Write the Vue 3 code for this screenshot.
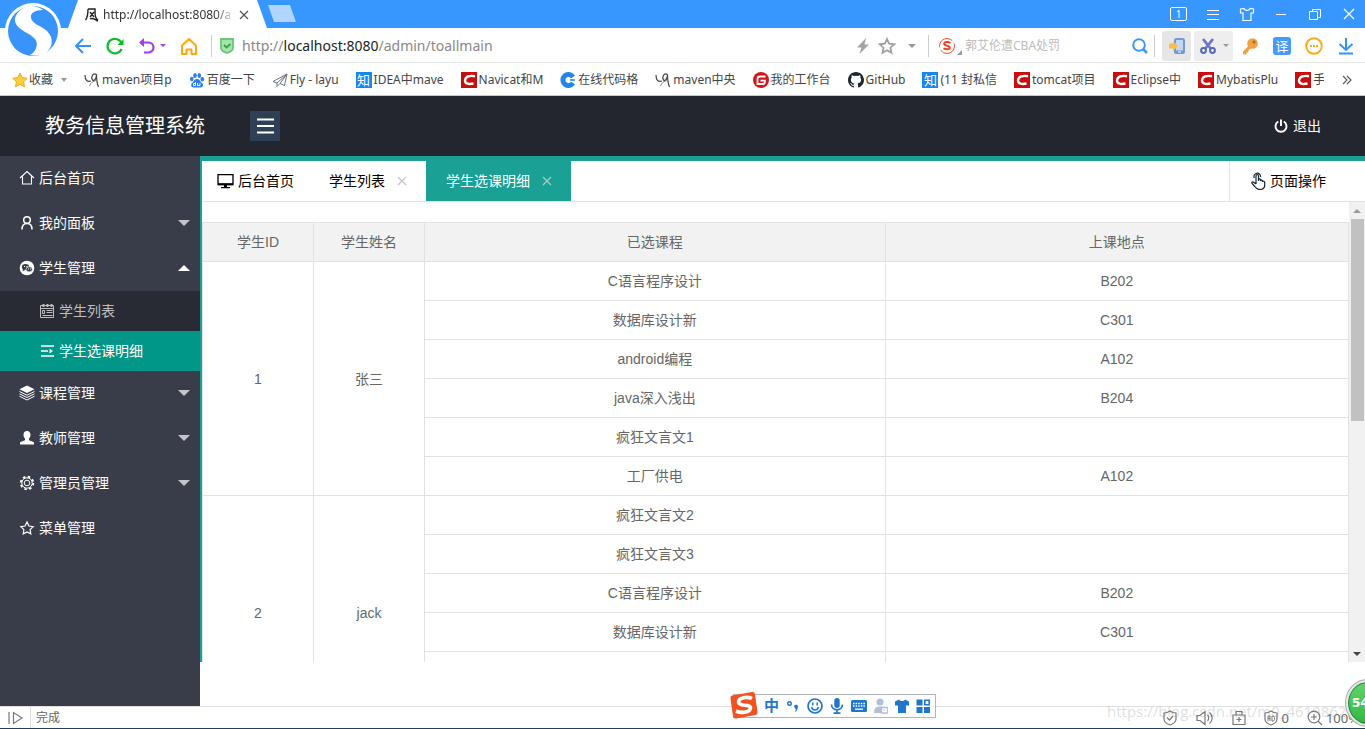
<script setup>
import { ref } from 'vue'

const icons = {
  back: '<path d="M17 9H2M9 2L2 9l7 7" fill="none" stroke="#3393fb" stroke-width="2"/>',
  reload: '<path d="M15.5 6A7.3 7.3 0 1 0 15.600 12" fill="none" stroke="#0cbd28" stroke-width="2.200"/><path d="M17.500 2v6h-6z" fill="#0cbd28"/>',
  undo: '<path d="M4 5.500h6.500a5 5 0 0 1 0 10H6" fill="none" stroke="#a03cf2" stroke-width="2.200"/><path d="M1 5.500L6 1v9z" fill="#a03cf2"/>',
  home: '<path d="M2 8.500L9 2l7 6.500V17h-4.500v-4.500h-5V17H2z" fill="none" stroke="#ffa511" stroke-width="2" stroke-linejoin="round"/>',
  bolt: '<path d="M12 1L3 10.500h4.500L5.500 17 15 7.500h-4.500z" fill="#a3a3a3"/>',
  star: '<path d="M9 2l2.100 4.700 5.100.6-3.800 3.400 1.100 5.100L9 13.200l-4.500 2.600 1.100-5.100L1.800 7.300l5.100-.6z" fill="none" stroke="#a0a0a0" stroke-width="1.800"/>',
  sogou: '<circle cx="9" cy="9" r="7.500" fill="none" stroke="#f0533a" stroke-width="1" stroke-dasharray="19 3"/><path d="M12.500 5.800C10 4.500 6.300 4.500 6.200 6.700c0 2.700 5.600 1.500 5.600 4 0 2-3.600 2-6.300.7" fill="none" stroke="#ee4327" stroke-width="2"/>',
  search: '<circle cx="8" cy="8" r="5.800" fill="none" stroke="#3e97f6" stroke-width="2"/><path d="M12 12l4 4" stroke="#3e97f6" stroke-width="2.500"/>',
  phone: '<rect x="7" y="2" width="9" height="14" rx="1.500" fill="#c3d7f5" stroke="#7399cf" stroke-width="2"/><path d="M7 15h9" stroke="#7399cf" stroke-width="3"/><path d="M10 15h3" stroke="#fff"/><path d="M1 6.500h4V4l5 5-5 5v-2.500H1z" fill="#fabd48"/>',
  cut: '<path d="M4 2l8 10M14 2L6 12" stroke="#6a78c4" stroke-width="2.800"/><circle cx="4.500" cy="13.500" r="2.400" fill="none" stroke="#5968b9" stroke-width="2"/><circle cx="13.500" cy="13.500" r="2.400" fill="none" stroke="#5968b9" stroke-width="2"/>',
  key: '<path d="M9 8L2.500 14.500V17H5v-2h2v-2l4-3" fill="#f0a045" stroke="#f0a045"/><circle cx="11.500" cy="6.500" r="5.300" fill="#f0a045"/><circle cx="13" cy="5" r="1.500" fill="#a86a20"/>',
  more: '<circle cx="9" cy="9" r="7.800" fill="none" stroke="#fba919" stroke-width="1.900"/><path d="M5 9h2M8 9h2M11 9h2" stroke="#fba919" stroke-width="2"/>',
  download: '<path d="M9 1v12M2.500 7L9 13l6.500-6M2 16.500h14" fill="none" stroke="#3393fb" stroke-width="2"/>',
  house: '<path d="M1 8L8 1.500 15 8M3.500 6.500V14h9V6.500" fill="none" stroke="currentColor" stroke-width="1.100"/>',
  user: '<circle cx="8" cy="5" r="3.300" fill="none" stroke="currentColor" stroke-width="1.500"/><path d="M3 14.500c0-4 2-6 5-6s5 2 5 6" fill="none" stroke="currentColor" stroke-width="1.500"/>',
  chat: '<circle cx="8" cy="8" r="7.300" fill="currentColor"/><ellipse cx="6.500" cy="7" rx="3.700" ry="3" fill="#393d49"/><path d="M4 9l-.5 2.500L7 9.500z" fill="#393d49"/><ellipse cx="10.200" cy="9.300" rx="3.200" ry="2.600" fill="#393d49" stroke="#fff" stroke-width=".7"/><path d="M5 6.500h1M7.500 6.500h1M9 9h1M11 9h1" stroke="#fff"/>',
  list: '<path d="M1.500 2.500h13v12h-13z" fill="none" stroke="currentColor"/><path d="M4.500 1v3M8.500 1v3M12.500 1v3" stroke="currentColor" stroke-width="2"/><path d="M1.500 5.500h13M3.500 7.500h2v3h-2zM7.500 7.500h6M7.500 9.500h6M3.500 12.500h10" fill="none" stroke="currentColor"/>',
  indent: '<path d="M2 3h13M2 8h7M2 13h13" stroke="currentColor" stroke-width="1.700"/><path d="M10.500 5.500L14 8l-3.500 2.500z" fill="currentColor"/>',
  layers: '<path d="M8 .5l7.500 3.700L8 8 .5 4.200z" fill="currentColor"/><path d="M.5 6.500L8 10.200l7.500-3.700M.5 8.800L8 12.500l7.500-3.700M.5 11.200L8 15l7.500-3.800" fill="none" stroke="currentColor"/>',
  teacher: '<path d="M8 1c2.500 0 3.600 1.700 3.500 4-.1 1.800-.8 2.800-1.500 3.800v1.400l4.500 1.800c.5.300.5 1 .5 2.500H1c0-1.500 0-2.200.5-2.500L6 10.200V8.800C5.300 7.800 4.600 6.800 4.500 5 4.400 2.700 5.500 1 8 1z" fill="currentColor"/>',
  gear: '<circle cx="8" cy="8" r="6.300" fill="none" stroke="currentColor" stroke-width="1.800" stroke-dasharray="2.500 2.450"/><circle cx="8" cy="8" r="5.200" fill="#393d49" stroke="currentColor"/><circle cx="8" cy="8" r="2.800" fill="none" stroke="currentColor"/>',
  fav: '<path d="M8 2l1.900 4 4.300.6-3.100 3 .7 4.300L8 11.900l-3.800 2 .7-4.300-3.100-3L6.100 6z" fill="none" stroke="currentColor" stroke-width="1.200"/>'
}

const leftTools = [['back', '后退'], ['reload', '刷新'], ['undo', '恢复']]

const bookmarks = [
  { kind: 'maven', text: 'maven项目p' },
  { kind: 'baidu', text: '百度一下' },
  { kind: 'fly', text: 'Fly - layu' },
  { kind: 'zhi', text: 'IDEA中mave' },
  { kind: 'csdn', text: 'Navicat和M' },
  { kind: 'code', text: '在线代码格' },
  { kind: 'maven', text: 'maven中央' },
  { kind: 'gitee', text: '我的工作台' },
  { kind: 'github', text: 'GitHub' },
  { kind: 'zhi', text: '(11 封私信' },
  { kind: 'csdn', text: 'tomcat项目' },
  { kind: 'csdn', text: 'Eclipse中' },
  { kind: 'csdn', text: 'MybatisPlu' },
  { kind: 'csdn', text: '手扌' }
]

const menu = ref([
  { icon: 'house', text: '后台首页' },
  { icon: 'user', text: '我的面板', more: true },
  {
    icon: 'chat', text: '学生管理', more: true, open: true,
    children: [
      { icon: 'list', text: '学生列表' },
      { icon: 'indent', text: '学生选课明细', active: true }
    ]
  },
  { icon: 'layers', text: '课程管理', more: true },
  { icon: 'teacher', text: '教师管理', more: true },
  { icon: 'gear', text: '管理员管理', more: true },
  { icon: 'fav', text: '菜单管理' }
])

const students = [
  {
    id: 1, name: '张三',
    courses: [['C语言程序设计', 'B202'], ['数据库设计新', 'C301'], ['android编程', 'A102'], ['java深入浅出', 'B204'], ['疯狂文言文1', ''], ['工厂供电', 'A102']]
  },
  {
    id: 2, name: 'jack',
    courses: [['疯狂文言文2', ''], ['疯狂文言文3', ''], ['C语言程序设计', 'B202'], ['数据库设计新', 'C301'], ['', ''], ['', '']]
  }
]
</script>

<template>
  <div class="window">
    <header class="chrome">
      <div class="titlebar">
        <div class="tab">
          <svg width="14" height="14" viewBox="0 0 14 14"><path d="M3 1h7v3c0 4 1 7 3 8M3 1c0 5 0 8-2.500 11M5 4l4 5M9 4l-4 5M5 11c3-2 5 1 8 2" fill="none" stroke="#222" stroke-width="1.400" /></svg>
          <span class="tab-title">http://localhost:8080/a</span>
          <button class="plain" aria-label="关闭标签"><svg width="10" height="10" viewBox="0 0 10 10"><path d="M1 1l8 8M9 1L1 9" stroke="#555" stroke-width="1.200" /></svg></button>
        </div>
        <button class="new-tab" aria-label="新建标签"></button>
        <div class="win-controls">
          <button class="count">1</button>
          <button class="plain" aria-label="菜单"><svg width="16" height="16" viewBox="0 0 16 16"><path d="M2 4.500h12M2 8.500h12M2 13.500h12" stroke="#fff" /></svg></button>
          <button class="plain" aria-label="皮肤"><svg width="16" height="16" viewBox="0 0 16 16"><path d="M5 2.500L1.500 3v4h2.500v7.500h8V7h2.500V3L11 2.500C10 5 6 5 5 2.500z" fill="none" stroke="#fff" stroke-width="1.200" /></svg></button>
          <button class="plain" aria-label="最小化"><svg width="16" height="16" viewBox="0 0 16 16"><path d="M3 8.500h10" stroke="#fff" /></svg></button>
          <button class="plain" aria-label="还原"><svg width="16" height="16" viewBox="0 0 16 16"><path d="M2.500 5.500h8v8h-8zM5.500 5V3.500h8v8H11" fill="none" stroke="#fff" /></svg></button>
          <button class="plain" aria-label="关闭"><svg width="16" height="16" viewBox="0 0 16 16"><path d="M3 3l10 10M13 3L3 13" stroke="#fff" stroke-width="1.200" /></svg></button>
        </div>
      </div>

      <div class="toolbar">
        <div class="nav">
          <button v-for="t in leftTools" :key="t[0]" class="plain" :aria-label="t[1]"><svg width="18" height="18" viewBox="0 0 18 18" v-html="icons[t[0]]"></svg></button>
        </div>
        <i class="caret purple"></i>
        <button class="plain home" aria-label="主页"><svg width="18" height="18" viewBox="0 0 18 18" v-html="icons.home"></svg></button>
        <i class="sep"></i>
        <svg class="shield" width="14" height="16" viewBox="0 0 14 16"><path d="M1 1h12v9c0 3-3 4-6 5-3-1-6-2-6-5z" fill="#a8e2ac" stroke="#67c777" stroke-width="1.800" /><path d="M4 7l2.500 2.500L10.500 6" fill="none" stroke="#35a24c" stroke-width="1.800" /></svg>
        <div class="url" role="textbox" aria-label="地址">http://<b>localhost:8080</b>/admin/toallmain</div>
        <div class="side">
          <button class="plain" aria-label="加速"><svg width="18" height="18" viewBox="0 0 18 18" v-html="icons.bolt"></svg></button>
          <button class="plain" aria-label="收藏本页"><svg width="18" height="18" viewBox="0 0 18 18" v-html="icons.star"></svg></button>
          <i class="caret"></i>
        </div>
        <i class="sep"></i>
        <form class="search" @submit.prevent>
          <svg width="18" height="18" viewBox="0 0 18 18" v-html="icons.sogou"></svg>
          <svg width="5" height="5" viewBox="0 0 5 5"><path d="M5 0v5H0z" fill="#999" /></svg>
          <input type="text" aria-label="搜索" placeholder="郭艾伦遭CBA处罚">
          <button class="plain" aria-label="搜索"><svg width="18" height="18" viewBox="0 0 18 18" v-html="icons.search"></svg></button>
        </form>
        <i class="sep"></i>
        <button class="plain boxed" aria-label="手机"><svg width="18" height="18" viewBox="0 0 18 18" v-html="icons.phone"></svg></button>
        <button class="plain boxed wide" aria-label="截图"><svg width="18" height="18" viewBox="0 0 18 18" v-html="icons.cut"></svg><i class="caret"></i></button>
        <div class="extras">
          <button class="plain" aria-label="密码"><svg width="18" height="18" viewBox="0 0 18 18" v-html="icons.key"></svg></button>
          <button class="plain translate">译</button>
          <button class="plain" aria-label="更多"><svg width="18" height="18" viewBox="0 0 18 18" v-html="icons.more"></svg></button>
          <button class="plain" aria-label="下载"><svg width="18" height="18" viewBox="0 0 18 18" v-html="icons.download"></svg></button>
        </div>
      </div>

      <nav class="bookmarks">
        <button class="plain fav">
          <svg width="16" height="16" viewBox="0 0 16 16"><path d="M8 1l2.200 4.600 5 .7-3.600 3.500.9 5L8 12.400l-4.500 2.400.9-5L.8 6.300l5-.7z" fill="#fbce3c" stroke="#e5a82c" /></svg>
          收藏<i class="caret"></i>
        </button>
        <div class="links">
          <a v-for="(b, i) in bookmarks" :key="i" href="#">
            <svg v-if="b.kind === 'maven'" width="16" height="16" viewBox="0 0 16 16"><path d="M1 3c0 5 2 7.500 6 6M12.500 2.500C9 .5 6.500 5 8.500 8c1.500 1.500 4-1 4-5.500 0 5 .5 9 2 12.500" fill="none" stroke="#444" stroke-width="1.200" /><path d="M12.500 8.500C9 9 6.500 11 5.500 14" fill="none" stroke="#888" /></svg>
            <svg v-else-if="b.kind === 'baidu'" width="16" height="16" viewBox="0 0 16 16"><g fill="#2b7df0"><ellipse cx="2.800" cy="7" rx="1.800" ry="2.300" /><ellipse cx="6" cy="3.500" rx="1.800" ry="2.500" /><ellipse cx="10.300" cy="3.500" rx="1.800" ry="2.500" /><ellipse cx="13.300" cy="7.200" rx="1.800" ry="2.300" /><path d="M8 7c3 0 3 2.500 5 4s1 4.500-1.500 4.500h-7C2 15.500 1.500 12.500 3.200 11S5 7 8 7z" /></g><path d="M6.500 10v3.500h-2v-2h2M8.500 11v2.500h2.500V11" fill="none" stroke="#fff" /></svg>
            <svg v-else-if="b.kind === 'fly'" width="16" height="16" viewBox="0 0 16 16"><path d="M15 2L1 9.500l4 1.500L15 2l-2.500 11.500-4.500-2L15 2M5 11v3.500l3-3" fill="none" stroke="#6b737d" /></svg>
            <span v-else-if="b.kind === 'zhi'" class="zhi" aria-hidden="true">知</span>
            <svg v-else-if="b.kind === 'csdn'" width="16" height="16" viewBox="0 0 16 16"><path d="M0 0h16v16H0z" fill="#c90d0d" /><path d="M14 4.200C9 3.200 4.300 4.500 4 8.500c0 3.500 4 4 8.500 3" fill="none" stroke="#fff" stroke-width="2.400" /></svg>
            <svg v-else-if="b.kind === 'code'" width="16" height="16" viewBox="0 0 16 16"><path d="M13 5A5.500 5.500 0 1 0 13 11" fill="none" stroke="#2386e8" stroke-width="5" /><path d="M10 8h5" stroke="#2386e8" stroke-width="1.500" /></svg>
            <svg v-else-if="b.kind === 'gitee'" width="16" height="16" viewBox="0 0 16 16"><circle cx="8" cy="8" r="8" fill="#d8141c" /><path d="M12.500 4.500H7C5 4.500 4.500 5.500 4.500 7v5H10c1.500 0 2-1 2-3.300H7.500" fill="none" stroke="#fff" stroke-width="1.800" /></svg>
            <svg v-else width="16" height="16" viewBox="0 0 16 16"><path d="M8 0C3.600 0 0 3.600 0 8c0 3.500 2.300 6.500 5.500 7.600.4.100.5-.2.500-.4v-1.400c-2.200.5-2.700-1-2.700-1-.4-.9-.9-1.200-.9-1.200-.7-.5.100-.5.100-.5.800.1 1.200.8 1.200.8.700 1.200 1.900.9 2.300.7.100-.5.300-.9.500-1.100-1.800-.2-3.600-.9-3.600-4 0-.9.300-1.600.8-2.100-.1-.2-.4-1 .1-2.100 0 0 .7-.2 2.200.8a7.600 7.600 0 0 1 4 0c1.500-1 2.200-.8 2.200-.8.400 1.100.2 1.900.1 2.100.5.600.8 1.300.8 2.100 0 3.100-1.900 3.700-3.700 3.900.3.300.6.700.6 1.500v2.200c0 .2.100.5.600.4C13.700 14.500 16 11.500 16 8c0-4.400-3.600-8-8-8z" fill="#20262c" /></svg>
            <span>{{ b.text }}</span>
          </a>
        </div>
        <button class="plain chev" aria-label="更多书签"><svg width="10" height="10" viewBox="0 0 10 10"><path d="M1 1l4 4-4 4M5 1l4 4-4 4" fill="none" stroke="#555" stroke-width="1.100" /></svg></button>
      </nav>

      <svg class="logo" width="60" height="60" viewBox="0 0 60 60"><circle cx="30" cy="30" r="28" fill="#fff" /><circle cx="30" cy="30" r="25" fill="#3894f8" /><path d="M22 6C13 11 10 18 13 23c4 7 14 9 19 15 4 5 1 13-5 16 5 1 11 1 16-2 7-6 8-15 1-22-5-5-15-7-16-13-1-5 4-8 12-8-5-4-12-5-18-3z" fill="#fff" /></svg>
    </header>

    <header class="app-header">
      <h1>教务信息管理系统</h1>
      <button class="burger" aria-label="折叠菜单"><svg width="18" height="16" viewBox="0 0 18 16"><path d="M1 1.500h17M1 8h17M1 14.500h17" stroke="#fff" stroke-width="2" /></svg></button>
      <a class="logout" href="#"><svg width="14" height="14" viewBox="0 0 14 14"><path d="M4.300 2.500a5.500 5.500 0 1 0 5.400 0M7 .5v6.500" fill="none" stroke="currentColor" stroke-width="1.900" /></svg>退出</a>
    </header>

    <div class="body">
      <nav class="sidebar">
        <div v-for="m in menu" :key="m.text">
          <a class="item" href="#" @click.prevent="m.open = !m.open">
            <svg width="16" height="16" viewBox="0 0 16 16" v-html="icons[m.icon]"></svg>
            <span>{{ m.text }}</span>
            <i v-if="m.more" class="arrow" :class="{ up: m.open }"></i>
          </a>
          <div v-if="m.children && m.open" class="sub">
            <a v-for="c in m.children" :key="c.text" href="#" :class="{ active: c.active }">
              <svg width="16" height="16" viewBox="0 0 16 16" v-html="icons[c.icon]"></svg>
              <span>{{ c.text }}</span>
            </a>
          </div>
        </div>
      </nav>

      <main>
        <div class="tabs">
          <a class="home-tab" href="#"><svg width="17" height="16" viewBox="0 0 17 16"><path d="M1 1.700h15v9.800H1z" fill="none" stroke="#000" stroke-width="1.300" /><path d="M1 11.200h15" stroke="#000" stroke-width="2" /><path d="M7 12h3v2h3v1.200H4V14h3z" fill="#000" /></svg>后台首页</a>
          <a href="#">学生列表<svg width="10" height="10" viewBox="0 0 10 10"><path d="M1 1l8 8M9 1L1 9" stroke="#c5c5c5" stroke-width="1.200" /></svg></a>
          <a class="current" href="#">学生选课明细<svg width="10" height="10" viewBox="0 0 10 10"><path d="M1 1l8 8M9 1L1 9" stroke="#a4cfc9" stroke-width="1.200" /></svg></a>
          <a class="ops" href="#"><svg width="15" height="18" viewBox="0 0 15 18"><path d="M5 12V4c0-2 2.500-2 2.500 0v5V7.500c0-1 2-1 2 .5v1c0-1.300 2-1 2 .3v.7c0-1.200 2.200-1 2.200.5v2.500c0 3-2 4.500-5 4.500-2.500 0-3.500-1-5-3L1 11.500c-.8-1.300.8-2.200 2-1L5 12M3.300 6A3.300 3.300 0 1 1 9.500 5" fill="none" stroke="#102030" stroke-width="1.200" /></svg>页面操作</a>
        </div>
        <div class="frame">
          <div class="content">
            <table>
              <colgroup><col class="narrow"><col class="narrow"><col class="course"><col></colgroup>
              <thead>
                <tr><th>学生ID</th><th>学生姓名</th><th>已选课程</th><th>上课地点</th></tr>
              </thead>
              <tbody>
                <template v-for="s in students" :key="s.id">
                  <tr v-for="(c, i) in s.courses" :key="i">
                    <td v-if="i === 0" :rowspan="s.courses.length">{{ s.id }}</td>
                    <td v-if="i === 0" :rowspan="s.courses.length">{{ s.name }}</td>
                    <td>{{ c[0] }}</td>
                    <td>{{ c[1] }}</td>
                  </tr>
                </template>
              </tbody>
            </table>
          </div>
          <div class="scrollbar"><i class="tri up"></i><span class="thumb"></span><i class="tri down"></i></div>
        </div>
      </main>
    </div>

    <footer class="status">
      <button class="plain play" aria-label="侧栏"><svg width="15" height="14" viewBox="0 0 15 14"><path d="M1 1v12M5.500 1.500v11L14 7z" fill="none" stroke="#777" stroke-width="1.200" /></svg></button>
      <span class="done">完成</span>
      <div class="tools">
        <svg width="16" height="16" viewBox="0 0 16 16"><path d="M2 3c2.500 0 4-.5 6-2 2 1.500 3.500 2 6 2v6c0 3.500-3 5-6 6-3-1-6-2.500-6-6zM5 7.500L7.500 10 11 6" fill="none" stroke="#777" stroke-width="1.200" /></svg>
        <svg width="18" height="16" viewBox="0 0 18 16"><path d="M1 5.500h3l5-4v13l-5-4H1zM11.500 5c1.500 1.500 1.500 4.500 0 6M13.500 2.500c3.500 3 3.500 8 0 11" fill="none" stroke="#777" stroke-width="1.200" /></svg>
        <svg width="14" height="16" viewBox="0 0 14 16"><path d="M1 5h12v9.500H1zM4 5V1.500h6V5M7 7v5M4.500 9.500h5" fill="none" stroke="#777" stroke-width="1.200" /></svg>
        <span class="ad"><svg width="14" height="16" viewBox="0 0 14 16"><path d="M1 3c2.500 0 4-.5 6-2 2 1.500 3.500 2 6 2v6c0 3.500-3 5-6 6-3-1-6-2.500-6-6z" fill="none" stroke="#777" stroke-width="1.200" /><path d="M4 11V6h2v5M4 8.500h2M8 6h1.500l1 1.500v2l-1 1.500H8z" fill="none" stroke="#777" /></svg>0</span>
        <span class="zoom"><svg width="16" height="16" viewBox="0 0 16 16"><path d="M11 11l4 4M7 4v6M4 7h6" stroke="#777" stroke-width="1.200" /><circle cx="7" cy="7" r="5.800" fill="none" stroke="#777" stroke-width="1.200" /></svg>100%</span>
      </div>
    </footer>

    <div class="watermark">https://blog.csdn.net/m0_46198627</div>
    <div class="ball">54</div>

    <div class="ime">
      <svg class="ime-logo" width="28" height="28" viewBox="0 0 28 28"><path d="M2 4.500L22 1q2.500-.3 3 2l2.500 18q.2 2.500-2 3L6 27.500q-2.500.2-3-2L.5 7.500Q0 5 2 4.500z" fill="#f0531f" /><path d="M22 7.500C17 5 8.500 7 8.500 11c0 5 12.500 1.500 12 6-.5 4.500-9 5.500-14.500 3" fill="none" stroke="#fff" stroke-width="3.600" /></svg>
      <span class="zh">中</span>
      <svg width="14" height="16" viewBox="0 0 14 16"><circle cx="3.500" cy="5.500" r="1.800" fill="none" stroke="#1f77cb" stroke-width="1.400" /><path d="M8 8.500a2 2 0 1 1 3.500 1.500c0 2-1 3.500-3 4 1-1 1.300-2 1.200-3" fill="#1f77cb" /></svg>
      <svg width="16" height="16" viewBox="0 0 16 16"><circle cx="8" cy="8" r="7" fill="none" stroke="#1f77cb" stroke-width="1.700" /><path d="M5.800 4.500v3M10.200 4.500v3M4.500 9c1 4 6 4 7 0" fill="none" stroke="#1f77cb" stroke-width="1.500" /></svg>
      <svg width="14" height="16" viewBox="0 0 14 16"><rect x="4.300" y="0" width="5.400" height="10" rx="2.700" fill="#1f77cb" /><path d="M1.500 6.500c0 7 11 7 11 0M7 12v3M3.500 15.200h7" fill="none" stroke="#1f77cb" stroke-width="1.700" /></svg>
      <svg width="16" height="16" viewBox="0 0 16 16"><rect y="2" width="16" height="12" rx="1.500" fill="#1f77cb" /><path d="M2 5.500h12M2 8h12" stroke="#fff" stroke-width="1.500" stroke-dasharray="1.500 1.100" /><path d="M4 11.200h8" stroke="#fff" stroke-width="1.300" /></svg>
      <svg width="14" height="16" viewBox="0 0 14 16"><circle cx="6" cy="4" r="3.500" fill="#b3bfd2" /><path d="M0 15c0-5 2-6.500 6-6.500s5 1 6 2V15z" fill="#b3bfd2" /><path d="M7.500 9.500h6v5.500h-6z" fill="#fff" stroke="#b3bfd2" stroke-width="1.300" /><path d="M10 11.500v1.500" stroke="#b3bfd2" /></svg>
      <svg width="14" height="16" viewBox="0 0 14 16"><path d="M4 1.500c1.500 2 4.500 2 6 0l4 2v4h-3V15H3V7.500H0v-4z" fill="#1f77cb" /></svg>
      <svg width="14" height="16" viewBox="0 0 14 16"><path d="M.5 1.500h6v6h-6zM.5 9h6v6h-6zM8 9h6v6H8z" fill="#1f77cb" /><path d="M8.800 2.300h4.400v4.400H8.800z" fill="none" stroke="#1f77cb" stroke-width="1.600" /></svg>
    </div>
  </div>
</template>

<style>
body {
  background: #fff;
}
</style>

<style scoped>
.window {
  position: relative;
  display: flex;
  flex-direction: column;
  height: 100vh;
  overflow: hidden;
  box-sizing: border-box;
  border-bottom: 1px solid #1f4057;
  font: 14px/20px "Liberation Sans", "Noto Sans CJK SC", sans-serif;
  color: #666;
}
svg {
  display: block;
  flex: none;
}
a {
  color: inherit;
  text-decoration: none;
}
button {
  font: inherit;
  color: inherit;
}
.plain {
  display: flex;
  align-items: center;
  justify-content: center;
  padding: 0;
  border: 0;
  background: none;
}
.chrome {
  position: relative;
  flex: none;
  font: 12px/16px "Noto Sans", "Noto Sans CJK SC", sans-serif;
  color: #444;
}
.titlebar {
  display: flex;
  height: 28px;
  background: #3797ff;
}
.tab {
  display: flex;
  align-items: center;
  gap: 4px;
  box-sizing: border-box;
  width: 199px;
  margin-left: 68px;
  padding: 2px 18px 0 17px;
  background: #fff;
  clip-path: polygon(10px 0, 189px 0, 100% 100%, 0 100%);
}
.tab-title {
  flex: 1;
  overflow: hidden;
  white-space: nowrap;
  color: #333;
  mask-image: linear-gradient(90deg, #000 85%, transparent);
}
.new-tab {
  width: 28px;
  height: 17px;
  margin: 5px 0 0 1px;
  padding: 0;
  border: 0;
  background: #b0d5ff;
  clip-path: polygon(0 0, 22px 0, 28px 100%, 6px 100%);
}
.win-controls {
  display: flex;
  align-items: center;
  gap: 18px;
  margin-left: auto;
  padding-right: 8px;
}
.count {
  width: 17px;
  height: 14px;
  padding: 0;
  border: 1px solid #fff;
  border-radius: 2px;
  background: none;
  color: #fff;
  font-size: 10px;
  line-height: 12px;
}
.toolbar {
  display: flex;
  align-items: center;
  box-sizing: border-box;
  height: 35px;
  padding: 1px 10px 0 74px;
  border-bottom: 1px solid #e3e3e3;
}
.nav {
  display: flex;
  gap: 14px;
}
.caret {
  flex: none;
  border: 4px solid transparent;
  border-top-color: #999;
  border-bottom: 0;
}
.caret.purple {
  margin-left: 4px;
  border-width: 3px 3px 0;
  border-top-color: #a03cf2;
}
.home {
  margin-left: 14px;
}
.sep {
  flex: none;
  width: 1px;
  height: 22px;
  background: #ccc;
}
.home + .sep {
  margin-left: 13px;
}
.shield {
  margin: 0 8px;
}
.url {
  flex: 1;
  color: #888;
  font-size: 14px;
  line-height: 20px;
}
.url b {
  color: #222;
  font-weight: 400;
}
.side {
  display: flex;
  align-items: center;
  gap: 6px;
  margin-right: 12px;
}
.side .caret {
  margin-left: 6px;
}
.search {
  display: flex;
  align-items: center;
  width: 211px;
  margin: 0 5px 0 9px;
}
.search > svg + svg {
  align-self: flex-end;
  margin-left: 1px;
}
.search input {
  flex: 1;
  min-width: 0;
  padding: 0 0 0 3px;
  border: 0;
  outline: 0;
  background: none;
  font: inherit;
}
.search input::placeholder {
  color: #bbb;
}
.boxed {
  width: 29px;
  height: 30px;
  margin-left: 7px;
  border-radius: 3px;
  background: #e6e6e6;
}
.boxed.wide {
  gap: 6px;
  width: 39px;
  margin-left: 3px;
  background: #eee;
}
.boxed .caret {
  border-width: 3px 3px 0;
}
.extras {
  display: flex;
  gap: 14px;
  margin-left: 8px;
}
.translate {
  width: 18px;
  height: 18px;
  border-radius: 3px;
  background: #459bfb;
  color: #fff;
  font-size: 13px;
}
.bookmarks {
  display: flex;
  align-items: center;
  box-sizing: border-box;
  height: 33px;
  padding: 1px 13px 0 12px;
  border-bottom: 1px solid #c8c8c8;
}
.fav {
  gap: 1px;
}
.fav .caret {
  margin-left: 7px;
  border-width: 4px 3px 0;
}
.links {
  display: flex;
  flex: 1;
  gap: 17px;
  min-width: 0;
  margin: 0 18px 0 17px;
  overflow: hidden;
}
.links a {
  display: flex;
  flex: none;
  align-items: center;
  gap: 2px;
  white-space: nowrap;
}
.zhi {
  width: 16px;
  height: 16px;
  background: #1687f0;
  color: #fff;
  font-size: 13px;
  line-height: 16px;
  text-align: center;
}
.logo {
  position: absolute;
  top: 1px;
  left: 3px;
}
.app-header {
  display: flex;
  flex: none;
  align-items: center;
  height: 60px;
  padding: 0 44px 0 45px;
  background: #23262e;
  color: #fff;
}
h1 {
  width: 205px;
  margin: 0;
  font-size: 20px;
  font-weight: 400;
  line-height: 28px;
}
.burger {
  display: flex;
  align-items: center;
  justify-content: center;
  width: 30px;
  height: 30px;
  padding: 0;
  border: 0;
  background: #2f4056;
}
.logout {
  display: flex;
  align-items: center;
  gap: 5px;
  margin-left: auto;
}
.body {
  display: flex;
  flex: 1;
  min-height: 0;
}
.sidebar {
  flex: none;
  width: 200px;
  background: #393d49;
  color: #fff;
}
.item,
.sub a {
  display: flex;
  align-items: center;
  gap: 4px;
  box-sizing: border-box;
  height: 45px;
  padding: 0 10px 1px 19px;
}
.arrow {
  margin-left: auto;
  border: 6px solid transparent;
  border-top-color: #c4c5c8;
  border-bottom: 0;
}
.arrow.up {
  border-top: 0;
  border-bottom: 6px solid #fff;
}
.sub {
  background: #282b33;
  color: #bdbebf;
}
.sub a {
  height: 40px;
  padding: 0 10px 0 39px;
}
.sub .active {
  background: #009688;
  color: #fff;
}
main {
  display: flex;
  flex: 1;
  flex-direction: column;
  min-width: 0;
  margin-bottom: 44px;
  border-top: 5px solid #1aa094;
  border-left: 2px solid #1aa094;
}
.tabs {
  display: flex;
  flex: none;
  height: 40px;
  border-bottom: 1px solid #e2e2e2;
  color: #000;
}
.tabs a {
  display: flex;
  align-items: center;
  gap: 12px;
  padding: 0 19px 0 20px;
}
.tabs .home-tab {
  gap: 4px;
  padding: 0 15px;
}
.tabs .current {
  background: #1aa094;
  color: #fff;
}
.tabs .ops {
  gap: 4px;
  margin-left: auto;
  padding: 0 39px 0 21px;
  border-left: 1px solid #e2e2e2;
}
.frame {
  display: flex;
  flex: 1;
  min-height: 0;
}
.content {
  flex: 1;
  overflow: hidden;
  padding-top: 20px;
}
table {
  width: 100%;
  border-collapse: collapse;
  table-layout: fixed;
  text-align: center;
}
.narrow {
  width: 111px;
}
.course {
  width: 40.2%;
}
th,
td {
  height: 38px;
  padding: 0;
  border: 1px solid #e2e2e2;
  font-weight: 400;
}
th {
  background: #f2f2f2;
}
.scrollbar {
  display: flex;
  flex-direction: column;
  align-items: center;
  width: 16px;
  background: #f1f1f1;
}
.thumb {
  width: 13px;
  height: 202px;
  margin-bottom: auto;
  background: #c1c1c1;
}
.tri {
  margin: 7px 0 6px;
  border: 4px solid transparent;
}
.tri.up {
  border-top: 0;
  border-bottom-color: #999;
}
.tri.down {
  border-bottom: 0;
  border-top-color: #444;
}
.status {
  display: flex;
  flex: none;
  align-items: center;
  height: 21px;
  border-top: 1px solid #e0e0e0;
  font-size: 12px;
}
.play {
  width: 31px;
  height: 21px;
  border-right: 1px solid #ddd;
}
.done {
  margin-left: 5px;
}
.tools {
  display: flex;
  align-items: center;
  gap: 18px;
  margin-left: auto;
  padding-right: 6px;
  font: 13px/18px "Noto Sans", sans-serif;
}
.ad,
.zoom {
  display: flex;
  align-items: center;
  gap: 3px;
}
.watermark {
  position: absolute;
  right: 10px;
  bottom: 7px;
  color: rgba(120, 120, 120, 0.25);
  font: 15px/20px "Open Sans", sans-serif;
}
.ball {
  position: absolute;
  right: -24px;
  bottom: 2px;
  box-sizing: border-box;
  width: 43px;
  height: 46px;
  padding-left: 4px;
  border: 2px solid #e8e8e8;
  border-radius: 50%;
  outline: 1px solid #aaa;
  background: linear-gradient(#63d36c, #30b840);
  box-shadow: inset 0 0 0 1px #1d7d40;
  color: #fff;
  font: bold 12px/42px "DejaVu Sans", sans-serif;
}
.ime {
  position: absolute;
  bottom: 10px;
  left: 733px;
  display: flex;
  align-items: center;
  gap: 7px;
  box-sizing: border-box;
  height: 24px;
  padding: 0 5px 0 30px;
  border: 1px solid #b4b4c0;
  background: #fff;
}
.ime-logo {
  position: absolute;
  top: -4px;
  left: -4px;
}
.zh {
  color: #1f77cb;
  font-size: 15px;
  font-weight: 700;
}
</style>
